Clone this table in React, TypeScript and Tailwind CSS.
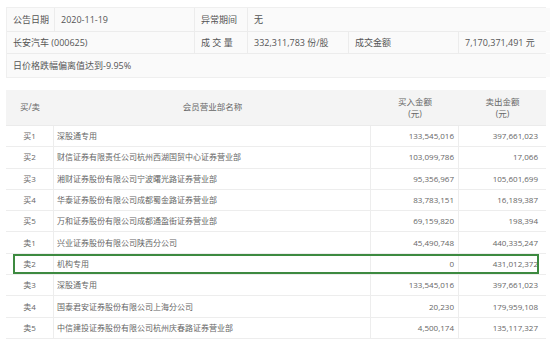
import React from "react";

const font = { fontFamily: '"Open Sans", "Noto Sans CJK SC", sans-serif' };

const rows = [
  ["买1", "深股通专用", "133,545,016", "397,661,023"],
  ["买2", "财信证券有限责任公司杭州西湖国贸中心证券营业部", "103,099,786", "17,066"],
  ["买3", "湘财证券股份有限公司宁波曙光路证券营业部", "95,356,967", "105,601,699"],
  ["买4", "华泰证券股份有限公司成都蜀金路证券营业部", "83,783,151", "16,189,387"],
  ["买5", "万和证券股份有限公司成都通盈街证券营业部", "69,159,820", "198,394"],
  ["卖1", "兴业证券股份有限公司陕西分公司", "45,490,748", "440,335,247"],
  ["卖2", "机构专用", "0", "431,012,372"],
  ["卖3", "深股通专用", "133,545,016", "397,661,023"],
  ["卖4", "国泰君安证券股份有限公司上海分公司", "20,230", "179,959,108"],
  ["卖5", "中信建投证券股份有限公司杭州庆春路证券营业部", "4,500,174", "135,117,327"],
];

function InfoCell({ children, span = "" }: { children: React.ReactNode; span?: string }) {
  return (
    <div className={`bg-[#fafafa] flex items-center px-[6px] whitespace-nowrap ${span}`}>
      {children}
    </div>
  );
}

export default function App() {
  return (
    <div className="w-[554px] h-[340px] bg-white overflow-hidden pt-[7px] px-[6px]" style={font}>
      {/* summary table */}
      <div className="w-[540px] border border-[#efefef] bg-[#ececec] grid grid-cols-[47px_139px_52px_100px_109px_91px] grid-rows-[23px_21px_23px] gap-px text-[9px] text-[#555]">
        <InfoCell>公告日期</InfoCell>
        <InfoCell>2020-11-19</InfoCell>
        <InfoCell>异常期间</InfoCell>
        <InfoCell span="col-span-3">无</InfoCell>

        <InfoCell span="col-span-2">长安汽车 (000625)</InfoCell>
        <InfoCell>成 交 量</InfoCell>
        <InfoCell>332,311,783 份/股</InfoCell>
        <InfoCell>成交金额</InfoCell>
        <InfoCell>7,170,371,491 元</InfoCell>

        <InfoCell span="col-span-6">日价格跌幅偏离值达到-9.95%</InfoCell>
      </div>

      {/* seats table */}
      <div className="mt-[12px] w-[540px] text-[#666]">
        <div className="h-[36px] bg-[#f4f4f4] grid grid-cols-[48px_317px_88px_87px] text-[8.5px] border-b border-[#ebebeb]">
          <div className="flex items-center justify-center">买/卖</div>
          <div className="flex items-center justify-center">会员营业部名称</div>
          <div className="flex flex-col items-center justify-center leading-[12px]">
            <span>买入金额</span>
            <span>(元)</span>
          </div>
          <div className="flex flex-col items-center justify-center leading-[12px]">
            <span>卖出金额</span>
            <span>(元)</span>
          </div>
        </div>

        {rows.map(([side, name, buy, sell]) => (
          <div
            key={side}
            className="relative h-[21.3px] grid grid-cols-[48px_317px_88px_87px] text-[8px] border-b border-[#ededed]"
          >
            <div className="flex items-center justify-center border-r border-[#ededed]">{side}</div>
            <div className="flex items-center pl-[3px] border-r border-[#ededed] whitespace-nowrap">{name}</div>
            <div className="flex items-center justify-end pr-[4px] border-r border-[#ededed]">{buy}</div>
            <div className="flex items-center justify-end pr-[8px]">{sell}</div>
            {side === "卖2" && (
              <div className="absolute top-0 bottom-0 left-[7px] right-[7px] border-2 border-[#3d8a40]" />
            )}
          </div>
        ))}
      </div>
    </div>
  );
}
